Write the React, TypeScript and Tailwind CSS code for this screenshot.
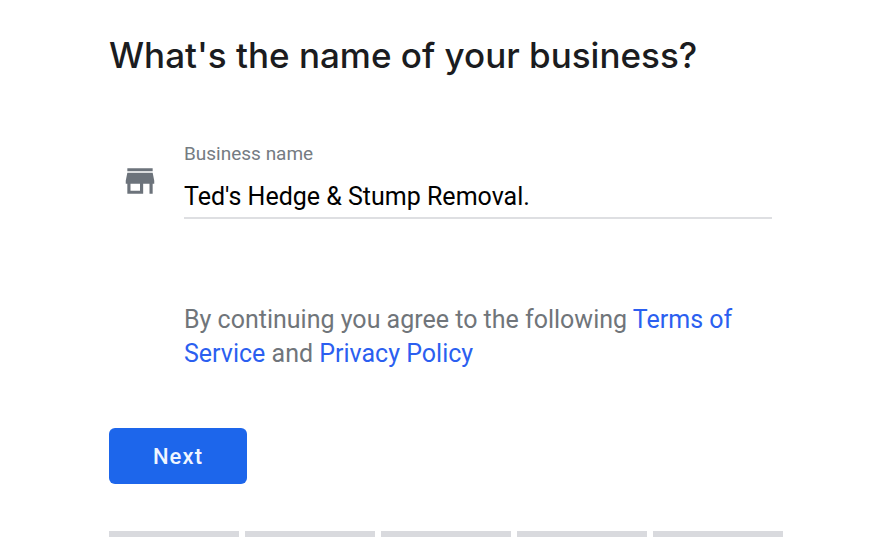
import { useState } from "react";

const steps = [1, 2, 3, 4, 5];

function StoreIcon() {
  return (
    <svg viewBox="0 0 24 24" className="mt-[15px] size-[38px] shrink-0 fill-[#6c737b]" aria-hidden="true">
      <path d="M20 4H4v1.8h16V4zm1 9.7v-1.9l-1-5H4l-1 5v1.9h1V20h10v-6.3h4V20h2v-6.3h1zm-9 4.5H6v-4.5h6v4.5z" />
    </svg>
  );
}

export default function App() {
  const [name, setName] = useState("Ted's Hedge & Stump Removal.");

  return (
    <main className="min-h-screen bg-white pt-[31px] pr-[91px] pl-[109px] font-['Roboto',sans-serif] text-[25px]">
      <h1 className="font-['Inter',sans-serif] text-[35px] font-medium leading-12 text-[#1b1c20]">
        What's the name of your business?
      </h1>

      <div className="mt-[68px] flex pl-3">
        <StoreIcon />
        <div className="mr-[11px] ml-[25px] flex flex-1 flex-col border-b-2 border-[#dedfe2]">
          <label htmlFor="business-name" className="text-[19px] leading-[14px] text-[#757b82]">
            Business name
          </label>
          <input
            id="business-name"
            type="text"
            value={name}
            onChange={(event) => setName(event.target.value)}
            className="mt-4 mb-0.5 h-[38px] w-full text-black outline-none"
          />
        </div>
      </div>

      <p className="mt-[84px] pr-[11px] pl-[75px] leading-[34px] text-[#70757a]">
        By continuing you agree to the following{" "}
        <a href="#terms" className="text-[#2b5ff0]">Terms of Service</a> and{" "}
        <a href="#privacy" className="text-[#2b5ff0]">Privacy Policy</a>
      </p>

      <button type="button" className="mt-[57px] h-14 w-[138px] rounded-md bg-[#1d66eb] text-[22px] font-medium tracking-wider text-[#f0f5ff]">
        Next
      </button>

      <div className="mt-[47px] grid grid-cols-5 gap-1.5" aria-hidden="true">
        {steps.map((step) => (
          <div key={step} className="h-1.5 bg-[#d9dade]" />
        ))}
      </div>
    </main>
  );
}
